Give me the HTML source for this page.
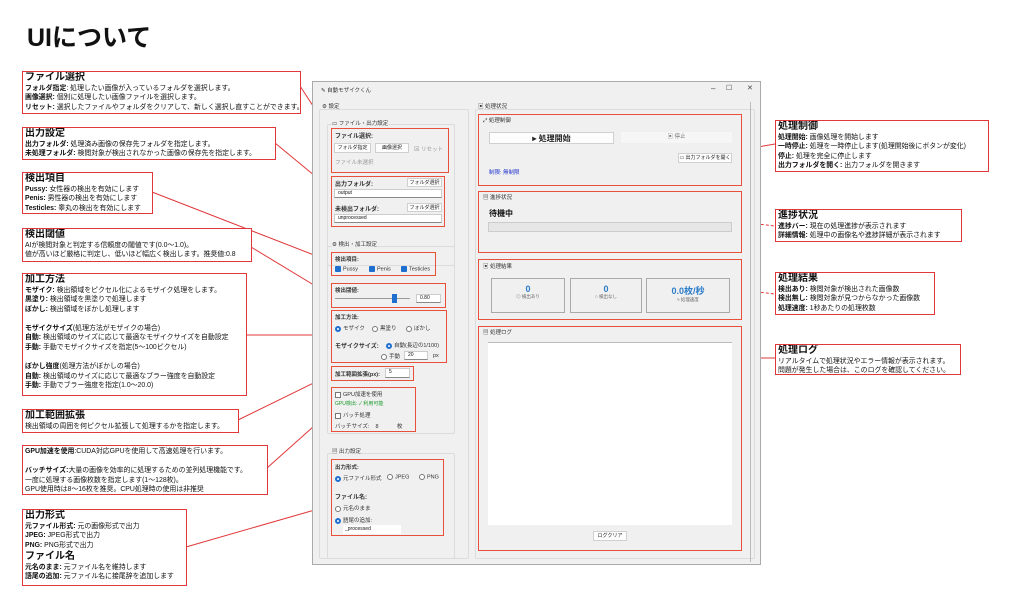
<!DOCTYPE html>
<html><head><meta charset="utf-8"><style>
*{margin:0;padding:0;box-sizing:border-box}
body{width:1024px;height:607px;background:#fff;position:relative;overflow:hidden;font-family:"Liberation Sans","Noto Sans CJK JP",sans-serif;color:#111}
.a{position:absolute}
.rb{position:absolute;border:1.5px solid #e0383a;background:#fff;padding:0 2px;font-size:6.9px;line-height:9.6px;white-space:nowrap;overflow:hidden}
.rb h3{font-size:10px;line-height:11.5px;font-weight:bold}
.rb b{font-weight:bold}
.ib{position:absolute;border:1.5px solid #e8503a}
.win{position:absolute;left:312px;top:81px;width:449px;height:484px;background:#f0f0f0;border:1px solid #aaa}
.s{font-size:5.5px;color:#333;position:absolute;white-space:nowrap}
.gb{position:absolute;border:1px solid #dcdcdc;border-radius:2px}
.btn{position:absolute;background:#fdfdfd;border:1px solid #d0d0d0;font-size:5px;text-align:center;color:#222;white-space:nowrap;overflow:hidden;line-height:8px}
.cb{display:inline-block;width:6px;height:6px;background:#1e6fd0;border-radius:1px;vertical-align:middle;margin-right:2px}
.rd{display:inline-block;width:6px;height:6px;border-radius:50%;border:1px solid #777;vertical-align:middle;margin-right:2px;background:#fff}
.rd.on{border:2px solid #1e6fd0}
.bx{display:inline-block;width:6px;height:6px;border:1px solid #777;vertical-align:middle;margin-right:2px;background:#fff}
.inp{position:absolute;background:#fff;border:1px solid #ccc;border-bottom:1px solid #888;font-size:5px;padding-left:3px;line-height:7px}
</style></head><body>
<div class="a" style="left:27px;top:18px;font-size:25px;font-weight:bold">UIについて</div>

<svg class="a" style="left:0;top:0" width="1024" height="607">
<g stroke="#e0383a" stroke-width="1" fill="none">
<line x1="300" y1="86" x2="332" y2="135"/>
<line x1="275" y1="143" x2="332" y2="190"/>
<line x1="152" y1="192" x2="332" y2="262"/>
<line x1="251" y1="247" x2="332" y2="296"/>
<line x1="246" y1="335" x2="332" y2="335"/>
<line x1="238" y1="420" x2="332" y2="374"/>
<line x1="267" y1="468" x2="332" y2="410"/>
<line x1="186" y1="547" x2="332" y2="505"/>
<line x1="741" y1="150" x2="775" y2="144"/>
<line x1="741" y1="222" x2="775" y2="226" stroke-dasharray="3,2"/>
<line x1="741" y1="290" x2="775" y2="294" stroke-dasharray="3,2"/>
<line x1="741" y1="358" x2="775" y2="358"/>
</g></svg>

<div class="rb" style="left:22px;top:71px;width:279px;height:43px"><h3>ファイル選択</h3><b>フォルダ指定</b>: 処理したい画像が入っているフォルダを選択します。<br><b>画像選択:</b> 個別に処理したい画像ファイルを選択します。<br><b>リセット:</b> 選択したファイルやフォルダをクリアして、新しく選択し直すことができます。</div>
<div class="rb" style="left:22px;top:127px;width:254px;height:33px"><h3>出力設定</h3><b>出力フォルダ:</b> 処理済み画像の保存先フォルダを指定します。<br><b>未処理フォルダ:</b> 検閲対象が検出されなかった画像の保存先を指定します。</div>
<div class="rb" style="left:22px;top:172px;width:131px;height:42px"><h3>検出項目</h3><b>Pussy:</b> 女性器の検出を有効にします<br><b>Penis:</b> 男性器の検出を有効にします<br><b>Testicles:</b> 睾丸の検出を有効にします</div>
<div class="rb" style="left:22px;top:228px;width:230px;height:34px"><h3>検出閾値</h3>AIが検閲対象と判定する信頼度の閾値です(0.0〜1.0)。<br>値が高いほど厳格に判定し、低いほど幅広く検出します。推奨値:0.8</div>
<div class="rb" style="left:22px;top:273px;width:225px;height:123px"><h3>加工方法</h3><b>モザイク:</b> 検出領域をピクセル化によるモザイク処理をします。<br><b>黒塗り:</b> 検出領域を黒塗りで処理します<br><b>ぼかし:</b> 検出領域をぼかし処理します<br><br><b>モザイクサイズ</b>(処理方法がモザイクの場合)<br><b>自動:</b> 検出領域のサイズに応じて最適なモザイクサイズを自動設定<br><b>手動:</b> 手動でモザイクサイズを指定(5〜100ピクセル)<br><br><b>ぼかし強度</b>(処理方法がぼかしの場合)<br><b>自動:</b> 検出領域のサイズに応じて最適なブラー強度を自動設定<br><b>手動:</b> 手動でブラー強度を指定(1.0〜20.0)</div>
<div class="rb" style="left:22px;top:409px;width:217px;height:24px"><h3>加工範囲拡張</h3>検出領域の周囲を何ピクセル拡張して処理するかを指定します。</div>
<div class="rb" style="left:22px;top:445px;width:246px;height:50px;padding-top:1px"><b>GPU加速を使用</b>:CUDA対応GPUを使用して高速処理を行います。<br><br><b>バッチサイズ:</b>大量の画像を効率的に処理するための並列処理機能です。<br> 一度に処理する画像枚数を指定します(1〜128枚)。<br>GPU使用時は8〜16枚を推奨。CPU処理時の使用は非推奨</div>
<div class="rb" style="left:22px;top:509px;width:165px;height:77px"><h3>出力形式</h3><b>元ファイル形式:</b> 元の画像形式で出力<br><b>JPEG:</b> JPEG形式で出力<br><b>PNG:</b> PNG形式で出力<h3 style="margin-top:1px">ファイル名</h3><b>元名のまま:</b> 元ファイル名を維持します<br><b>語尾の追加:</b> 元ファイル名に接尾辞を追加します</div>

<div class="rb" style="left:775px;top:120px;width:214px;height:52px"><h3>処理制御</h3><b>処理開始:</b> 画像処理を開始します<br><b>一時停止:</b> 処理を一時停止します(処理開始後にボタンが変化)<br><b>停止:</b> 処理を完全に停止します<br><b>出力フォルダを開く:</b> 出力フォルダを開きます</div>
<div class="rb" style="left:775px;top:209px;width:187px;height:33px"><h3>進捗状況</h3><b>進捗バー:</b> 現在の処理進捗が表示されます<br><b>詳細情報:</b> 処理中の画像名や進捗詳細が表示されます</div>
<div class="rb" style="left:775px;top:272px;width:160px;height:43px"><h3>処理結果</h3><b>検出あり:</b> 検閲対象が検出された画像数<br><b>検出無し:</b> 検閲対象が見つからなかった画像数<br><b>処理速度:</b> 1秒あたりの処理枚数</div>
<div class="rb" style="left:775px;top:344px;width:186px;height:31px"><h3>処理ログ</h3>リアルタイムで処理状況やエラー情報が表示されます。<br>問題が発生した場合は、このログを確認してください。</div>

<div class="win">
 <div class="s" style="left:8px;top:4px">✎ 自動モザイクくん</div>
 <div class="s" style="left:398px;top:2px;font-size:8px;color:#444">–</div>
 <div class="s" style="left:413px;top:2px;font-size:7px;color:#444">☐</div>
 <div class="s" style="left:434px;top:2px;font-size:7px;color:#444">✕</div>
 <div class="s" style="left:9px;top:20px">⚙ 設定</div>
 <div class="s" style="left:165px;top:20px">▣ 処理状況</div>
 <div class="gb" style="left:6px;top:27px;width:150px;height:450px"></div>
 <div class="gb" style="left:162px;top:27px;width:280px;height:450px"></div>
 <div style="position:absolute;left:437px;top:20px;width:1px;height:460px;background:#bbb"></div>
 <div class="gb" style="left:14px;top:42px;width:128px;height:142px"></div>
 <div class="s" style="left:19px;top:37px;background:#f0f0f0">▭ ファイル・出力設定</div>
 <div class="gb" style="left:14px;top:164px;width:128px;height:188px"></div>
 <div class="s" style="left:19px;top:158px;background:#f0f0f0">⚙ 検出・加工設定</div>
 <div class="gb" style="left:14px;top:371px;width:128px;height:106px"></div>
 <div class="s" style="left:19px;top:365px;background:#f0f0f0">▤ 出力設定</div>
</div>

<div class="ib" style="left:331px;top:128px;width:118px;height:45px"></div>
<div class="s" style="left:335px;top:131px;font-weight:bold;font-size:6px">ファイル選択:</div>
<div class="btn" style="left:334px;top:143px;width:37px;height:10px">フォルダ指定</div>
<div class="btn" style="left:375px;top:143px;width:34px;height:10px">画像選択</div>
<div class="s" style="left:414px;top:145px;color:#999">⊠ リセット</div>
<div class="s" style="left:335px;top:158px;color:#999">ファイル未選択</div>

<div class="ib" style="left:331px;top:176px;width:114px;height:51px"></div>
<div class="s" style="left:335px;top:179px;font-weight:bold;font-size:6px">出力フォルダ:</div>
<div class="btn" style="left:407px;top:178px;width:35px;height:9px">フォルダ選択</div>
<div class="inp" style="left:334px;top:189px;width:108px;height:9px">output</div>
<div class="s" style="left:335px;top:204px;font-weight:bold;font-size:6px">未検出フォルダ:</div>
<div class="btn" style="left:407px;top:203px;width:35px;height:9px">フォルダ選択</div>
<div class="inp" style="left:334px;top:214px;width:108px;height:9px">unprocessed</div>

<div class="ib" style="left:331px;top:252px;width:105px;height:24px"></div>
<div class="s" style="left:335px;top:255px;font-weight:bold">検出項目:</div>
<div class="s" style="left:335px;top:266px"><span class="cb"></span>Pussy</div>
<div class="s" style="left:369px;top:266px"><span class="cb"></span>Penis</div>
<div class="s" style="left:401px;top:266px"><span class="cb"></span>Testicles</div>

<div class="ib" style="left:331px;top:283px;width:115px;height:25px"></div>
<div class="s" style="left:335px;top:286px;font-weight:bold">検出閾値:</div>
<div class="a" style="left:335px;top:298px;width:75px;height:1px;background:#999"></div>
<div class="a" style="left:392px;top:294px;width:5px;height:9px;background:#1e6fd0"></div>
<div class="inp" style="left:416px;top:294px;width:25px;height:9px">0.80</div>

<div class="ib" style="left:331px;top:310px;width:116px;height:53px"></div>
<div class="s" style="left:335px;top:313px;font-weight:bold">加工方法:</div>
<div class="s" style="left:335px;top:324px"><span class="rd on"></span>モザイク</div>
<div class="s" style="left:372px;top:324px"><span class="rd"></span>黒塗り</div>
<div class="s" style="left:406px;top:324px"><span class="rd"></span>ぼかし</div>
<div class="s" style="left:335px;top:341px;font-weight:bold;font-size:6px">モザイクサイズ:</div>
<div class="s" style="left:386px;top:341px"><span class="rd on"></span>自動(長辺の1/100)</div>
<div class="s" style="left:381px;top:352px"><span class="rd"></span>手動</div>
<div class="inp" style="left:404px;top:351px;width:24px;height:9px">20</div>
<div class="s" style="left:433px;top:353px">px</div>

<div class="ib" style="left:331px;top:366px;width:83px;height:15px"></div>
<div class="s" style="left:335px;top:370px;font-weight:bold">加工範囲拡張(px):</div>
<div class="inp" style="left:385px;top:368px;width:25px;height:10px">5</div>

<div class="ib" style="left:331px;top:387px;width:85px;height:45px"></div>
<div class="s" style="left:335px;top:390px"><span class="bx"></span>GPU加速を使用</div>
<div class="s" style="left:335px;top:400px;color:#1a9a2a;font-size:5px">GPU検出: ✓ 利用可能</div>
<div class="s" style="left:335px;top:411px"><span class="bx"></span>バッチ処理</div>
<div class="s" style="left:335px;top:422px">バッチサイズ:&nbsp;&nbsp;&nbsp;&nbsp;8&nbsp;&nbsp;&nbsp;&nbsp;&nbsp;&nbsp;&nbsp;&nbsp;&nbsp;&nbsp;&nbsp;&nbsp;枚</div>

<div class="ib" style="left:331px;top:459px;width:113px;height:77px"></div>
<div class="s" style="left:335px;top:463px;font-weight:bold">出力形式:</div>
<div class="s" style="left:335px;top:474px"><span class="rd on"></span>元ファイル形式</div>
<div class="s" style="left:387px;top:474px"><span class="rd"></span>JPEG</div>
<div class="s" style="left:419px;top:474px"><span class="rd"></span>PNG</div>
<div class="s" style="left:335px;top:492px;font-weight:bold;font-size:6px">ファイル名:</div>
<div class="s" style="left:335px;top:504px"><span class="rd"></span>元名のまま</div>
<div class="s" style="left:335px;top:516px"><span class="rd on"></span>語尾の追加:</div>
<div class="a" style="left:343px;top:525px;width:58px;height:9px;background:#fff;font-size:5px;line-height:9px;padding-left:2px">_processed</div>

<div class="ib" style="left:478px;top:114px;width:264px;height:72px"></div>
<div class="s" style="left:483px;top:116px">⤢ 処理制御</div>
<div class="btn" style="left:489px;top:132px;width:125px;height:12px;font-size:8px;font-weight:bold;line-height:11px">▸ 処理開始</div>
<div class="a" style="left:621px;top:132px;width:111px;height:11px;background:#f6f6f6;font-size:5.5px;color:#777;text-align:center;line-height:11px">▣ 停止</div>
<div class="btn" style="left:678px;top:153px;width:54px;height:10px">▭ 出力フォルダを開く</div>
<div class="s" style="left:489px;top:168px;color:#2233cc">制限: 無制限</div>

<div class="ib" style="left:478px;top:191px;width:264px;height:62px"></div>
<div class="s" style="left:483px;top:193px">▤ 進捗状況</div>
<div class="s" style="left:489px;top:208px;font-size:8px;font-weight:bold;color:#111">待機中</div>
<div class="a" style="left:488px;top:222px;width:244px;height:10px;background:#e6e6e6;border:1px solid #ccc"></div>

<div class="ib" style="left:478px;top:259px;width:264px;height:61px"></div>
<div class="s" style="left:483px;top:262px">▣ 処理結果</div>
<div class="a" style="left:491px;top:278px;width:74px;height:35px;border:1px solid #aaa;text-align:center"><div style="font-size:9px;color:#2c7dc9;font-weight:bold;margin-top:5px">0</div><div style="font-size:4.5px;color:#666">◎ 検出あり</div></div>
<div class="a" style="left:570px;top:278px;width:72px;height:35px;border:1px solid #aaa;text-align:center"><div style="font-size:9px;color:#2c7dc9;font-weight:bold;margin-top:5px">0</div><div style="font-size:4.5px;color:#666">○ 検出なし</div></div>
<div class="a" style="left:646px;top:278px;width:84px;height:35px;border:1px solid #aaa;text-align:center"><div style="font-size:9px;color:#2c7dc9;font-weight:bold;margin-top:5px">0.0枚/秒</div><div style="font-size:4.5px;color:#666">ϟ 処理速度</div></div>

<div class="ib" style="left:478px;top:326px;width:264px;height:225px"></div>
<div class="s" style="left:483px;top:328px">▤ 処理ログ</div>
<div class="a" style="left:488px;top:342px;width:244px;height:183px;background:#fff;border-top:1px solid #bbb"></div>
<div class="btn" style="left:593px;top:531px;width:34px;height:10px">ログクリア</div>
</body></html>
